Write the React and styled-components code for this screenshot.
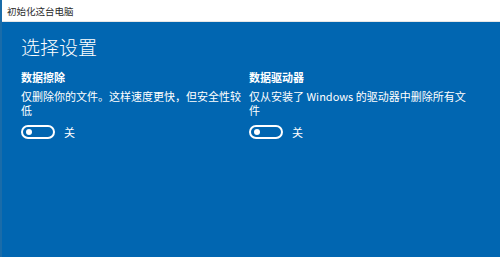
import React from 'react';
import styled, { createGlobalStyle } from 'styled-components';

const GlobalStyle = createGlobalStyle`
  html, body {
    margin: 0;
    padding: 0;
    width: 500px;
    height: 257px;
    overflow: hidden;
    background: #0166b1;
  }
  body {
    font-family: "Noto Sans CJK SC", "Noto Sans", sans-serif;
  }
`;

const Window = styled.div`
  width: 500px;
  height: 257px;
  display: flex;
  flex-direction: column;
  background: #0166b1;
  border-left: 2px solid #1a6ca9;
  box-sizing: border-box;
`;

const TitleBar = styled.div`
  height: 22px;
  flex-shrink: 0;
  background: #ffffff;
  display: flex;
  align-items: center;
  padding-left: 5px;
  font-size: 9.5px;
  color: #2b2b2b;
  border-bottom: 1px solid #e6e6e6;
  box-sizing: border-box;
`;

const Content = styled.div`
  padding: 13px 0 0 19px;
  color: #ffffff;
`;

const Heading = styled.h1`
  margin: 0;
  font-size: 19px;
  line-height: 24px;
  font-weight: 300;
`;

const Columns = styled.div`
  display: grid;
  grid-template-columns: 226px 226px;
  column-gap: 2px;
  margin-top: 11px;
`;

const Option = styled.div`
  display: flex;
  flex-direction: column;
`;

const OptionTitle = styled.div`
  font-size: 11px;
  line-height: 15px;
  font-weight: 700;
`;

const Description = styled.div`
  margin-top: 4px;
  font-size: 11px;
  line-height: 14px;
`;

const ToggleRow = styled.div`
  display: flex;
  align-items: center;
  gap: 9px;
  margin-top: 7px;
  font-size: 11px;
`;

const Switch = styled.div`
  width: 34px;
  height: 14px;
  box-sizing: border-box;
  border: 2px solid #ffffff;
  border-radius: 7px;
  display: flex;
  align-items: center;
  padding-left: 3px;
`;

const Knob = styled.div`
  width: 6px;
  height: 6px;
  border-radius: 50%;
  background: #ffffff;
`;

const options = [
  {
    title: '数据擦除',
    text: '仅删除你的文件。这样速度更快，但安全性较低',
  },
  {
    title: '数据驱动器',
    text: '仅从安装了 Windows 的驱动器中删除所有文件',
  },
];

const App = () => (
  <>
    <GlobalStyle />
    <Window>
      <TitleBar>初始化这台电脑</TitleBar>
      <Content>
        <Heading>选择设置</Heading>
        <Columns>
          {options.map((o) => (
            <Option key={o.title}>
              <OptionTitle>{o.title}</OptionTitle>
              <Description>{o.text}</Description>
              <ToggleRow>
                <Switch>
                  <Knob />
                </Switch>
                关
              </ToggleRow>
            </Option>
          ))}
        </Columns>
      </Content>
    </Window>
  </>
);

export default App;
